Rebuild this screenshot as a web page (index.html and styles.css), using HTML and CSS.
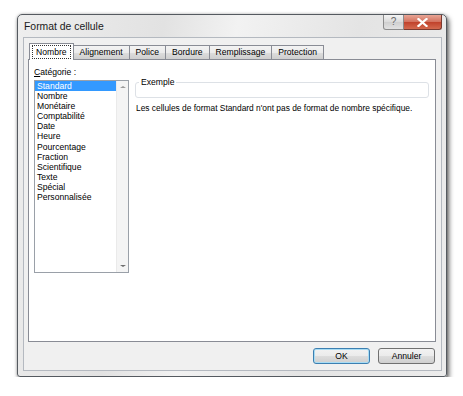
FILE: index.html
```html
<!DOCTYPE html>
<html lang="fr">
<head>
    <meta charset="UTF-8">
    <meta name="viewport" content="width=device-width, initial-scale=1.0">
    <title>Format de cellule</title>

    <link rel="stylesheet" href="styles.css">
</head>
<body>
    <div class="page">
        <div class="window">
            <div class="titlebar">
                <span class="title">Format de cellule</span>
                <div class="controls">
                    <div class="btn-help">?</div>
                    <div class="btn-close">
                        <svg width="11" height="9" viewBox="0 0 11 9">
                            <path d="M1.5 1 L9.5 8 M9.5 1 L1.5 8" stroke="#fff" stroke-width="2.2" stroke-linecap="square"/>
                        </svg>
                    </div>
                </div>
            </div>

            <div class="client">
                <div class="tabs">
                    <div class="tab active"><span class="focus">Nombre</span></div>
                    <div class="tab">Alignement</div>
                    <div class="tab">Police</div>
                    <div class="tab">Bordure</div>
                    <div class="tab">Remplissage</div>
                    <div class="tab">Protection</div>
                </div>

                <div class="panel">
                    <div class="left-col">
                        <div class="label"><u>C</u>atégorie :</div>
                        <div class="listbox">
                            <ul class="items">
                                <li class="selected">Standard</li>
                                <li>Nombre</li>
                                <li>Monétaire</li>
                                <li>Comptabilité</li>
                                <li>Date</li>
                                <li>Heure</li>
                                <li>Pourcentage</li>
                                <li>Fraction</li>
                                <li>Scientifique</li>
                                <li>Texte</li>
                                <li>Spécial</li>
                                <li>Personnalisée</li>
                            </ul>
                            <div class="scrollbar">
                                <span class="arrow up"></span>
                                <span class="arrow down"></span>
                            </div>
                        </div>
                    </div>

                    <div class="right-col">
                        <fieldset class="sample">
                            <legend>Exemple</legend>
                        </fieldset>
                        <p class="desc">Les cellules de format Standard n'ont pas de format de nombre spécifique.</p>
                    </div>
                </div>

                <div class="footer">
                    <button class="button default">OK</button>
                    <button class="button">Annuler</button>
                </div>
            </div>
        </div>
    </div>
</body>
</html>
```

FILE: styles.css
```css
body{
    margin: 0;
    background-color: #ffffff;
    font-family: "Liberation Sans", Arial, sans-serif;
    font-size: 8.6px;
    color: #000;
}
.page{
    padding: 14px 0 0 17px;
}
.window{
    width: 419px;
    height: 356px;
    border: 1px solid #555a60;
    border-radius: 5px 5px 3px 3px;
    background: linear-gradient(100deg, #eeeeee 0%, #e2e2e2 30%, #f2f2f2 45%, #e4e4e4 70%, #ececec 100%);
    box-shadow: 2px 3px 5px rgba(0, 0, 0, 0.6), 0 0 3px rgba(0, 0, 0, 0.25);
    display: flex;
    flex-direction: column;
    padding: 0 4px 5px 5px;
}
.titlebar{
    height: 22px;
    display: flex;
    justify-content: space-between;
    align-items: flex-start;
}
.title{
    margin-top: 6px;
    margin-left: 1px;
    font-size: 10.4px;
    color: #1a1a1a;
}
.controls{
    display: flex;
    margin-right: 0;
}
.btn-help{
    width: 19px;
    height: 14px;
    border: 1px solid #8c8c8c;
    border-top: none;
    border-radius: 0 0 0 3px;
    background: linear-gradient(#f4f4f4, #dadada 50%, #cfcfcf 51%, #e2e2e2);
    color: #6a6a6a;
    font-size: 10px;
    text-align: center;
    line-height: 14px;
}
.btn-close{
    width: 37px;
    height: 14px;
    border: 1px solid #7a3a30;
    border-top: none;
    border-left: none;
    border-radius: 0 0 3px 0;
    background: linear-gradient(#e8a595, #d2705d 50%, #c0412b 51%, #d46a4f);
    display: flex;
    align-items: center;
    justify-content: center;
}
.client{
    flex: 1;
    background-color: #f0f0f0;
    border: 1px solid #b4b9c0;
    display: flex;
    flex-direction: column;
    padding: 5px 5px 0 4px;
}
.tabs{
    display: flex;
    height: 16px;
    padding-left: 1px;
    position: relative;
    z-index: 1;
}
.tab{
    height: 13px;
    margin-top: 2px;
    padding: 0 6px;
    border: 1px solid #898c95;
    border-left: none;
    border-bottom: none;
    background: linear-gradient(#f3f3f3, #ebebeb 50%, #dddddd 51%, #cfcfcf);
    line-height: 13px;
    white-space: nowrap;
}
.tab.active{
    height: 16px;
    margin-top: 0;
    padding: 0 2px;
    border-left: 1px solid #898c95;
    background: #ffffff;
    line-height: 16px;
    margin-bottom: -1px;
}
.focus{
    display: inline-block;
    padding: 0 3px;
    line-height: 12px;
    border: 1px dotted #333;
}
.panel{
    height: 281px;
    border: 1px solid #898c95;
    background-color: #ffffff;
    display: flex;
    padding: 0 6px 0 5px;
}
.left-col{
    width: 95px;
}
.label{
    margin-top: 7px;
    height: 13px;
}
.listbox{
    height: 191px;
    border: 1px solid #9aa0a8;
    display: flex;
}
.items{
    list-style: none;
    margin: 0;
    padding: 0;
    flex: 1;
}
.items li{
    height: 10.1px;
    line-height: 10px;
    padding-left: 2px;
}
.items li.selected{
    background-color: #3399ff;
    color: #ffffff;
}
.scrollbar{
    width: 11px;
    background-color: #f4f4f4;
    border-left: 1px solid #eaeaea;
    display: flex;
    flex-direction: column;
    justify-content: space-between;
    align-items: center;
    padding: 5px 0;
}
.arrow{
    width: 0;
    height: 0;
    border-left: 3px solid transparent;
    border-right: 3px solid transparent;
}
.arrow.up{
    border-bottom: 2px solid #9a9a9a;
}
.arrow.down{
    border-top: 2px solid #6e6e6e;
}
.right-col{
    flex: 1;
    margin-left: 6px;
}
.sample{
    margin: 17px 0 0 0;
    height: 19px;
    padding: 0;
    border: 1px solid #dde1e6;
    border-radius: 3px;
}
.sample legend{
    margin-left: 3px;
    padding: 0 2px;
    line-height: 10px;
}
.desc{
    margin: 5px 0 0 1px;
    font-size: 8.4px;
}
.footer{
    flex: 1;
    display: flex;
    justify-content: flex-end;
    align-items: flex-start;
    gap: 8px;
    padding: 6px 1px 0 0;
}
.button{
    width: 57px;
    height: 16px;
    border: 1px solid #707070;
    border-radius: 3px;
    background: linear-gradient(#f2f2f2, #ebebeb 50%, #dddddd 51%, #cfcfcf);
    font-family: "Liberation Sans", Arial, sans-serif;
    font-size: 8.6px;
    padding: 0;
    color: #000;
}
.button.default{
    border-color: #3c7fb1;
    box-shadow: inset 0 0 0 1px #a8dcf4;
}
```
